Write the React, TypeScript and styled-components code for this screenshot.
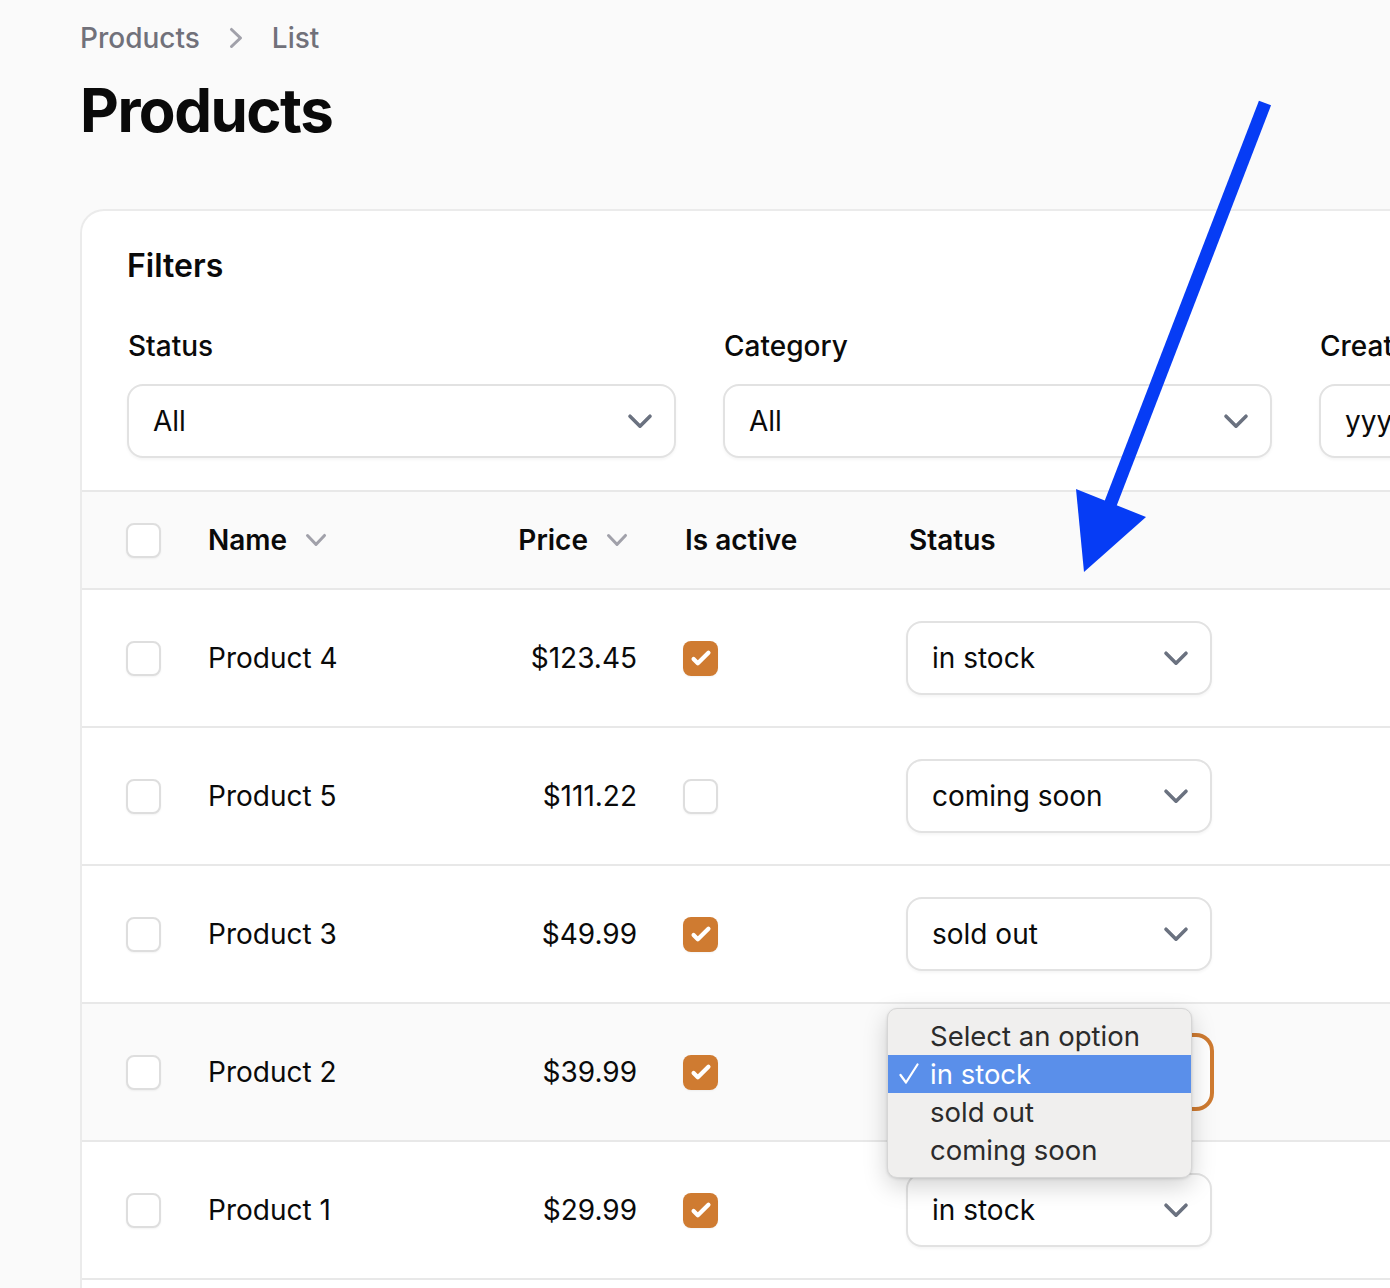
import React from 'react';
import styled, { createGlobalStyle, css } from 'styled-components';

const GlobalStyle = createGlobalStyle`
  html, body {
    margin: 0;
    padding: 0;
    background: #fafafa;
    overflow: hidden;
  }
  body {
    font-family: Inter, "Liberation Sans", sans-serif;
    color: #0a0a0a;
  }
`;

const Page = styled.div`
  position: relative;
  width: 1390px;
  height: 1288px;
  overflow: hidden;
`;

const Main = styled.main`
  padding: 18px 0 0 80px;
`;

const Breadcrumbs = styled.nav`
  display: flex;
  align-items: center;
  gap: 16px;
  font-size: 28px;
  line-height: 40px;
  font-weight: 500;
  color: #71717a;
  svg {
    color: #a1a1aa;
  }
`;

const Heading = styled.h1`
  margin: 16px 0 0;
  font-size: 60px;
  line-height: 72px;
  font-weight: 700;
  letter-spacing: -0.025em;
  color: #0a0a0a;
`;

const Card = styled.section`
  margin-top: 63px;
  width: 1900px;
  background: #fff;
  border: 2px solid #ebebeb;
  border-bottom: none;
  border-radius: 24px 24px 0 0;
`;

const FilterSection = styled.div`
  padding: 31px 48px 32px 45px;
`;

const FiltersTitle = styled.h2`
  margin: 0 0 36px;
  font-size: 32px;
  line-height: 48px;
  font-weight: 600;
`;

const FilterGrid = styled.div`
  display: grid;
  grid-template-columns: repeat(3, 549px);
  gap: 47px;
`;

const FieldLabel = styled.div`
  font-size: 28px;
  line-height: 40px;
  font-weight: 500;
  margin-bottom: 18px;
  padding-left: 1px;
`;

const SelectWrap = styled.div`
  position: relative;
  width: fit-content;
`;

const SelectBox = styled.div<{ $width?: number; $focused?: boolean }>`
  box-sizing: border-box;
  width: ${({ $width }) => ($width ? `${$width}px` : '549px')};
  height: 74px;
  display: flex;
  align-items: center;
  justify-content: space-between;
  padding: 0 14px 0 24px;
  border: 2px solid #e2e2e2;
  border-radius: 16px;
  background: #fff;
  box-shadow: 0 2px 3px rgba(0, 0, 0, 0.04);
  font-size: 28px;
  color: #0a0a0a;
  white-space: nowrap;
  overflow: hidden;
  svg {
    flex-shrink: 0;
    color: #6b7280;
  }
  ${({ $focused }) =>
    $focused &&
    css`
      border-color: #cf7b31;
      box-shadow: 0 0 0 2px #cf7b31;
    `}
`;

const Columns = css`
  display: grid;
  grid-template-columns: 126px 289px 164px 224px 1fr;
  align-items: center;
  box-sizing: border-box;
  border-top: 2px solid #e8e8e8;
`;

const HeadRow = styled.div`
  ${Columns};
  height: 98px;
  background: #fafafa;
`;

const BodyRow = styled.div<{ $hover?: boolean }>`
  ${Columns};
  height: 138px;
  background: ${({ $hover }) => ($hover ? '#fafafa' : '#fff')};
`;

const Footer = styled.div`
  border-top: 2px solid #e8e8e8;
  height: 120px;
`;

const CheckCell = styled.div`
  padding-left: 44px;
  display: flex;
`;

const TextCell = styled.div<{ $align?: 'start' | 'end'; $pl?: number; $pr?: number }>`
  display: flex;
  align-items: center;
  justify-content: ${({ $align }) => ($align === 'end' ? 'flex-end' : 'flex-start')};
  padding-left: ${({ $pl }) => $pl ?? 0}px;
  padding-right: ${({ $pr }) => $pr ?? 0}px;
  font-size: 28px;
  line-height: 40px;
  color: #0a0a0a;
`;

const HeadLabel = styled.span`
  font-size: 28px;
  line-height: 40px;
  font-weight: 600;
  color: #0a0a0a;
`;

const SortButton = styled.div`
  display: flex;
  align-items: center;
  gap: 9px;
  svg {
    color: #a1a1aa;
  }
`;

const Checkbox = styled.div<{ $checked?: boolean }>`
  box-sizing: border-box;
  width: 35px;
  height: 35px;
  border-radius: 8px;
  display: flex;
  align-items: center;
  justify-content: center;
  background: ${({ $checked }) => ($checked ? '#cf7b31' : '#fff')};
  border: ${({ $checked }) => ($checked ? 'none' : '2px solid #dedede')};
  box-shadow: 0 1px 2px rgba(0, 0, 0, 0.05);
`;

const Popup = styled.div`
  position: absolute;
  left: -19px;
  top: -27px;
  width: 305px;
  box-sizing: border-box;
  padding: 8px 0;
  background: #f0efee;
  border: 1px solid #d6d6d6;
  border-radius: 10px;
  box-shadow: 0 8px 24px rgba(0, 0, 0, 0.18), 0 1px 3px rgba(0, 0, 0, 0.12);
  z-index: 5;
`;

const Option = styled.div<{ $active?: boolean }>`
  display: flex;
  align-items: center;
  height: 38px;
  padding-left: 11px;
  font-size: 27.5px;
  color: ${({ $active }) => ($active ? '#fff' : '#2b2b2b')};
  background: ${({ $active }) => ($active ? '#5a8fea' : 'transparent')};
  svg {
    width: 31px;
    flex-shrink: 0;
  }
`;

const ArrowLayer = styled.svg`
  position: absolute;
  left: 0;
  top: 0;
  pointer-events: none;
  z-index: 10;
`;

const ChevronDown = ({ size = 40 }: { size?: number }) => (
  <svg width={size} height={size} viewBox="0 0 20 20" fill="none">
    <path d="M5 7.6l5 5 5-5" stroke="currentColor" strokeWidth="1.8" strokeLinecap="round" strokeLinejoin="round" />
  </svg>
);

const SortChevron = () => (
  <svg width={40} height={40} viewBox="0 0 20 20" fill="currentColor">
    <path d="M5.23 7.21a.75.75 0 011.06.02L10 11.168l3.71-3.938a.75.75 0 111.08 1.04l-4.25 4.5a.75.75 0 01-1.08 0l-4.25-4.5a.75.75 0 01.02-1.06z" />
  </svg>
);

const CheckMark = () => (
  <svg width={34} height={34} viewBox="0 0 16 16" fill="#fff">
    <path d="M12.207 4.793a1 1 0 010 1.414l-5 5a1 1 0 01-1.414 0l-2-2a1 1 0 011.414-1.414L6.5 9.086l4.293-4.293a1 1 0 011.414 0z" />
  </svg>
);

type Row = { name: string; price: string; active: boolean; status: string; open?: boolean };

const rows: Row[] = [
  { name: 'Product 4', price: '$123.45', active: true, status: 'in stock' },
  { name: 'Product 5', price: '$111.22', active: false, status: 'coming soon' },
  { name: 'Product 3', price: '$49.99', active: true, status: 'sold out' },
  { name: 'Product 2', price: '$39.99', active: true, status: 'in stock', open: true },
  { name: 'Product 1', price: '$29.99', active: true, status: 'in stock' },
];

const options = ['Select an option', 'in stock', 'sold out', 'coming soon'];

const StatusMenu = ({ value }: { value: string }) => (
  <Popup>
    {options.map((o) => (
      <Option key={o} $active={o === value}>
        <svg height={22} viewBox="0 0 31 22" fill="none">
          {o === value && (
            <polyline points="1.5,12 7,19.5 18.5,1.5" stroke="#fff" strokeWidth="2.2" strokeLinecap="round" strokeLinejoin="round" />
          )}
        </svg>
        <span>{o}</span>
      </Option>
    ))}
  </Popup>
);

export default function App() {
  return (
    <Page>
      <GlobalStyle />
      <Main>
        <Breadcrumbs>
          <span>Products</span>
          <svg width={40} height={40} viewBox="0 0 20 20" fill="currentColor">
            <path d="M7.21 14.77a.75.75 0 01.02-1.06L11.168 10 7.23 6.29a.75.75 0 111.04-1.08l4.5 4.25a.75.75 0 010 1.08l-4.5 4.25a.75.75 0 01-1.06-.02z" />
          </svg>
          <span>List</span>
        </Breadcrumbs>
        <Heading>Products</Heading>

        <Card>
          <FilterSection>
            <FiltersTitle>Filters</FiltersTitle>
            <FilterGrid>
              <div>
                <FieldLabel>Status</FieldLabel>
                <SelectBox>
                  All
                  <ChevronDown />
                </SelectBox>
              </div>
              <div>
                <FieldLabel>Category</FieldLabel>
                <SelectBox>
                  All
                  <ChevronDown />
                </SelectBox>
              </div>
              <div>
                <FieldLabel>Created from</FieldLabel>
                <SelectBox>yyyy-mm-dd</SelectBox>
              </div>
            </FilterGrid>
          </FilterSection>

          <HeadRow>
            <CheckCell>
              <Checkbox />
            </CheckCell>
            <TextCell>
              <SortButton>
                <HeadLabel>Name</HeadLabel>
                <SortChevron />
              </SortButton>
            </TextCell>
            <TextCell $align="end" $pr={24}>
              <SortButton>
                <HeadLabel>Price</HeadLabel>
                <SortChevron />
              </SortButton>
            </TextCell>
            <TextCell $pl={24}>
              <HeadLabel>Is active</HeadLabel>
            </TextCell>
            <TextCell $pl={24}>
              <HeadLabel>Status</HeadLabel>
            </TextCell>
          </HeadRow>

          {rows.map((r) => (
            <BodyRow key={r.name} $hover={r.open}>
              <CheckCell>
                <Checkbox />
              </CheckCell>
              <TextCell>{r.name}</TextCell>
              <TextCell $align="end" $pr={24}>
                {r.price}
              </TextCell>
              <TextCell $pl={22}>
                <Checkbox $checked={r.active}>{r.active && <CheckMark />}</Checkbox>
              </TextCell>
              <TextCell $pl={21}>
                <SelectWrap>
                  <SelectBox $width={306} $focused={r.open}>
                    {r.status}
                    <ChevronDown />
                  </SelectBox>
                  {r.open && <StatusMenu value={r.status} />}
                </SelectWrap>
              </TextCell>
            </BodyRow>
          ))}
          <Footer />
        </Card>
      </Main>

      <ArrowLayer width={1390} height={1288} viewBox="0 0 1390 1288">
        <line x1="1265" y1="103" x2="1110" y2="505" stroke="#063cf5" strokeWidth="13" />
        <polygon points="1076,489 1146,517 1084,572" fill="#063cf5" />
      </ArrowLayer>
    </Page>
  );
}
